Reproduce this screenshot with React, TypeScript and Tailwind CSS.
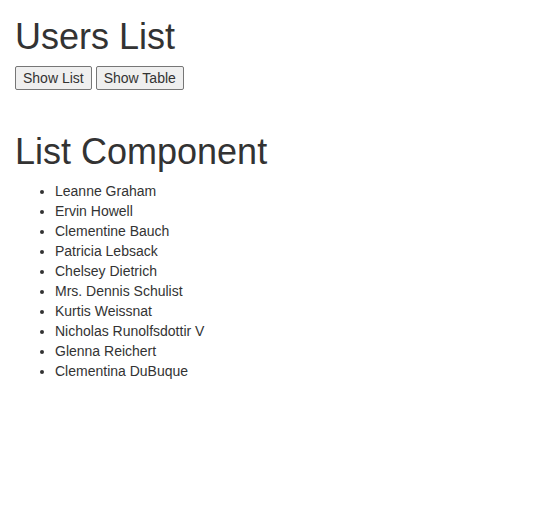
import React, { useState } from 'react';

const users = [
  'Leanne Graham',
  'Ervin Howell',
  'Clementine Bauch',
  'Patricia Lebsack',
  'Chelsey Dietrich',
  'Mrs. Dennis Schulist',
  'Kurtis Weissnat',
  'Nicholas Runolfsdottir V',
  'Glenna Reichert',
  'Clementina DuBuque',
];

const App = () => {
  const [view, setView] = useState<'list' | 'table'>('list');

  return (
    <div className="min-h-screen bg-white px-[15px] text-[14px] leading-[20px] text-[#333] font-['Liberation_Sans',Arial,sans-serif]">
      <h1 className="pt-[17px] mb-[9px] text-[36px] leading-[1.1] font-normal">Users List</h1>
      <div className="flex gap-[4px]">
        <button
          onClick={() => setView('list')}
          className="h-[24px] px-[7px] border border-[#767676] rounded-[2px] bg-[#efefef] text-[14px] text-[#333]"
        >
          Show List
        </button>
        <button
          onClick={() => setView('table')}
          className="h-[24px] px-[7px] border border-[#767676] rounded-[2px] bg-[#efefef] text-[14px] text-[#333]"
        >
          Show Table
        </button>
      </div>

      {view === 'list' ? (
        <>
          <h1 className="mt-[42px] mb-[10px] text-[36px] leading-[1.1] font-normal">List Component</h1>
          <ul className="list-disc pl-[40px]">
            {users.map((u) => (
              <li key={u}>{u}</li>
            ))}
          </ul>
        </>
      ) : (
        <>
          <h1 className="mt-[42px] mb-[10px] text-[36px] leading-[1.1] font-normal">Table Component</h1>
          <table>
            <tbody>
              {users.map((u, i) => (
                <tr key={u}>
                  <td className="pr-4">{i + 1}</td>
                  <td>{u}</td>
                </tr>
              ))}
            </tbody>
          </table>
        </>
      )}
    </div>
  );
};

export default App;
